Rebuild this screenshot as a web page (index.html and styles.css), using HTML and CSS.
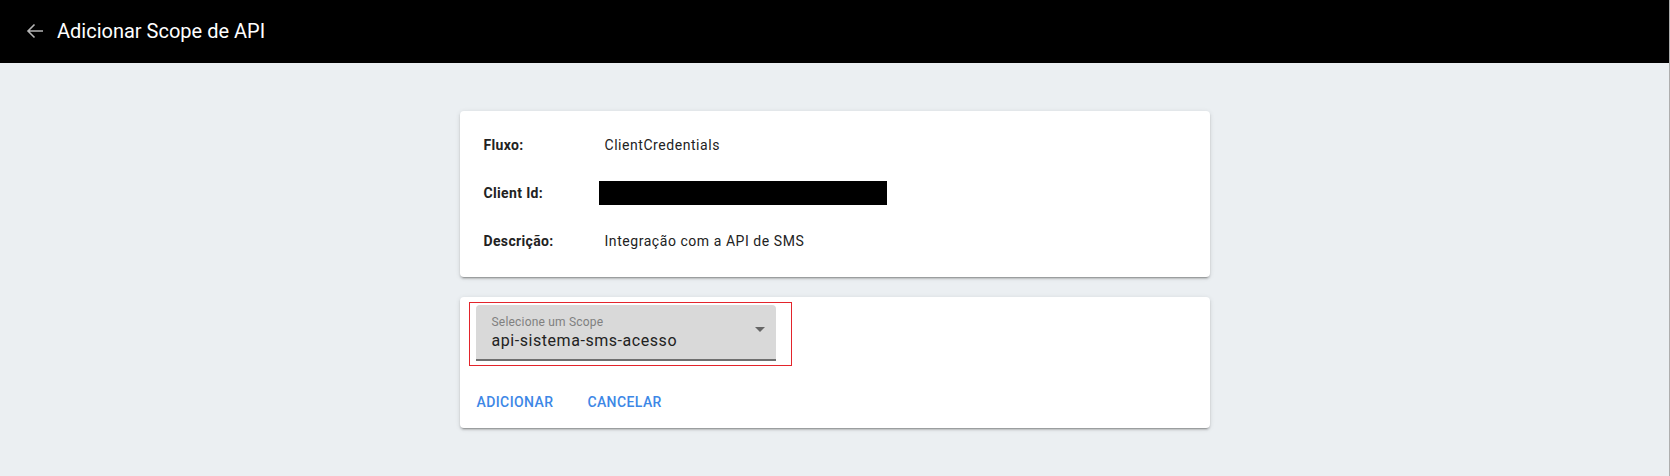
FILE: index.html
```html
<!DOCTYPE html>
<html lang="pt">
<head>
<meta charset="utf-8">
<title>Adicionar Scope de API</title>
<link rel="stylesheet" href="styles.css">
</head>
<body>
<div class="app">
  <header class="toolbar">
    <button class="back" aria-label="Voltar">
      <svg viewBox="0 0 24 24" width="24" height="24"><path d="M20 12H5M11.5 5.5L5 12l6.5 6.5" fill="none" stroke="currentColor" stroke-width="1.6"/></svg>
    </button>
    <h1 class="title">Adicionar Scope de API</h1>
  </header>
  <main class="content">
    <section class="card info">
      <div class="row"><span class="label">Fluxo:</span><span class="value">ClientCredentials</span></div>
      <div class="row"><span class="label">Client Id:</span><span class="value"><span class="redacted"></span></span></div>
      <div class="row"><span class="label">Descrição:</span><span class="value">Integração com a API de SMS</span></div>
    </section>
    <section class="card form">
      <div class="highlight">
        <div class="select">
          <div class="select-text">
            <span class="select-label">Selecione um Scope</span>
            <span class="select-value">api-sistema-sms-acesso</span>
          </div>
          <svg class="caret" viewBox="0 0 10 5" width="10" height="5"><path d="M0 0h10L5 5z" fill="currentColor"/></svg>
        </div>
      </div>
      <div class="actions">
        <button class="btn">ADICIONAR</button>
        <button class="btn">CANCELAR</button>
      </div>
    </section>
  </main>
</div>
</body>
</html>
```

FILE: styles.css
```css
html, body {
  margin: 0;
  padding: 0;
  height: 100%;
}
body {
  font-family: Roboto, "Liberation Sans", sans-serif;
  background: #ebeff2;
  color: #222;
}
.app {
  min-height: 100%;
  border-right: 1px solid #aeaeae;
  background: #ebeff2;
  box-sizing: border-box;
}
.toolbar {
  height: 63px;
  background: #000;
  display: flex;
  align-items: center;
  padding-left: 23px;
}
.back {
  background: none;
  border: 0;
  padding: 0;
  color: #b5b5b5;
  display: flex;
  width: 24px;
  height: 24px;
  margin-top: -2px;
  cursor: pointer;
}
.title {
  margin: -1px 0 0 10px;
  color: #fff;
  font-size: 20px;
  font-weight: 400;
  letter-spacing: 0;
}
.content {
  display: flex;
  flex-direction: column;
  align-items: center;
  padding-top: 48px;
  gap: 20px;
}
.card {
  width: 750px;
  background: #fff;
  border-radius: 4px;
  box-shadow: 0 3px 1px -2px rgba(0,0,0,.2), 0 2px 2px 0 rgba(0,0,0,.14), 0 1px 5px 0 rgba(0,0,0,.12);
  box-sizing: border-box;
}
.info {
  height: 166px;
  padding: 10px 24px 0 24px;
  display: flex;
  flex-direction: column;
}
.row {
  height: 48px;
  display: flex;
  align-items: center;
  font-size: 14px;
}
.label {
  width: 121px;
  font-weight: 700;
  color: #222;
  letter-spacing: 0.35px;
}
.value {
  color: #222;
  letter-spacing: 0.55px;
}
.redacted {
  display: block;
  width: 288px;
  height: 24px;
  background: #000;
  margin-left: -6px;
}
.form {
  height: 131px;
  padding: 5px 0 0 9px;
}
.highlight {
  width: 323px;
  border: 1px solid #e3242b;
  padding: 2px 6px 4px 6px;
  box-sizing: border-box;
}
.select {
  width: 300px;
  height: 56px;
  background: #d9d9d9;
  border-radius: 4px 4px 0 0;
  border-bottom: 2px solid #6f6f6f;
  box-sizing: border-box;
  display: flex;
  align-items: center;
  padding: 0 11px 0 16px;
}
.select-text {
  flex: 1;
  display: flex;
  flex-direction: column;
  margin-top: 2px;
}
.select-label {
  font-size: 12px;
  color: #808080;
  line-height: 16px;
  letter-spacing: 0.2px;
}
.select-value {
  font-size: 16px;
  color: #222;
  line-height: 22px;
  letter-spacing: 0.55px;
}
.caret {
  color: #666;
  margin-top: -6px;
}
.actions {
  display: flex;
  margin-top: 18px;
  margin-left: -8px;
  gap: 2px;
}
.btn {
  height: 36px;
  padding: 0 16px;
  background: none;
  border: 0;
  font-family: Roboto, "Liberation Sans", sans-serif;
  font-size: 14px;
  font-weight: 500;
  letter-spacing: 0.4px;
  color: #3d87e6;
  cursor: pointer;
}
```
